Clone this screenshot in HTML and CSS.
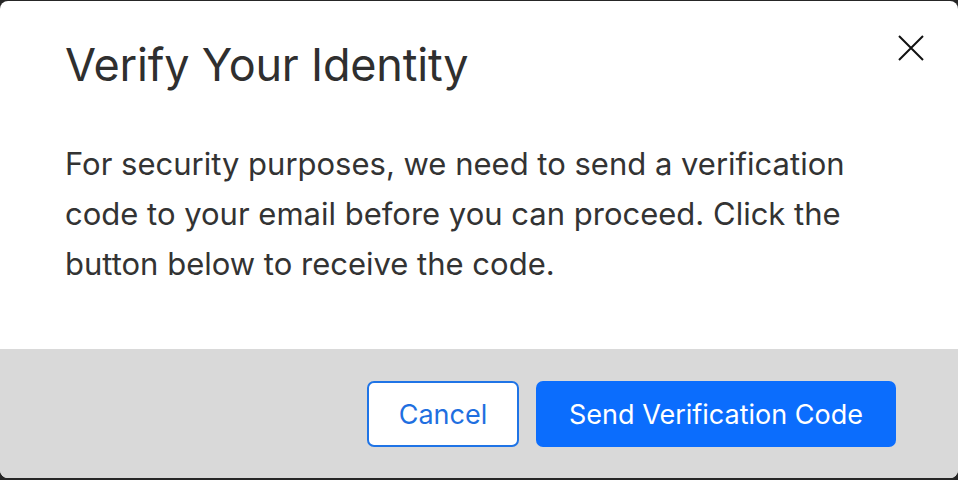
FILE: index.html
```html
<!DOCTYPE html>
<html lang="en">
<head>
<meta charset="utf-8">
<title>Verify Your Identity</title>
<link rel="stylesheet" href="styles.css">
</head>
<body>
<div class="dialog" role="dialog" aria-labelledby="dlg-title">
  <div class="dialog-header">
    <h2 class="dialog-title" id="dlg-title">Verify Your Identity</h2>
    <button class="close-btn" aria-label="Close">
      <svg width="26" height="26" viewBox="0 0 26 26" aria-hidden="true"><path d="M1 1L25 25M25 1L1 25" stroke="#111" stroke-width="2" fill="none"/></svg>
    </button>
  </div>
  <div class="dialog-body">
    <p class="dialog-text">For security purposes, we need to send a verification code to your email before you can proceed. Click the button below to receive the code.</p>
  </div>
  <div class="dialog-footer">
    <button class="btn btn-outline">Cancel</button>
    <button class="btn btn-primary">Send Verification Code</button>
  </div>
</div>
</body>
</html>
```
FILE: styles.css
```css
html, body {
  margin: 0;
  padding: 0;
}
body {
  background: #262626;
  font-family: Inter, "Noto Sans", sans-serif;
  height: 480px;
  overflow: hidden;
}
.dialog {
  margin-top: 1px;
  height: 477px;
  background: #fff;
  border-radius: 8px;
  overflow: hidden;
  display: flex;
  flex-direction: column;
}
.dialog-header {
  display: flex;
  justify-content: space-between;
  align-items: flex-start;
  padding: 34px 34px 0 65px;
}
.dialog-title {
  margin: 0;
  margin-top: 1px;
  font-size: 45px;
  font-weight: 400;
  color: #2f2f2f;
  line-height: 58px;
  letter-spacing: -0.2px;
}
.close-btn {
  background: none;
  border: 0;
  padding: 0;
  width: 26px;
  height: 26px;
  cursor: pointer;
}
.close-btn svg { display: block; }
.dialog-body {
  flex: 1;
  padding: 45px 65px 0 65px;
}
.dialog-text {
  margin: 0;
  font-size: 31px;
  line-height: 50px;
  color: #333;
  max-width: 810px;
}
.dialog-footer {
  background: #d9d9d9;
  height: 129px;
  box-sizing: border-box;
  display: flex;
  justify-content: flex-end;
  align-items: center;
  gap: 17px;
  padding: 0 62px 0 0;
}
.btn {
  font-family: Inter, "Noto Sans", sans-serif;
  font-size: 27px;
  height: 66px;
  padding-top: 3px;
  border-radius: 7px;
  box-sizing: border-box;
  cursor: pointer;
}
.btn-outline {
  width: 152px;
  background: #fff;
  border: 2px solid #1f74e6;
  color: #1f6fe0;
}
.btn-primary {
  width: 360px;
  background: #0b6dfd;
  border: 0;
  color: #fff;
}
```
